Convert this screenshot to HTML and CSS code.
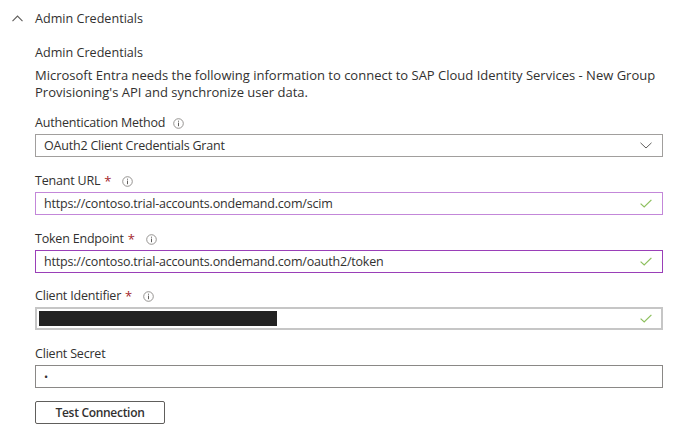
FILE: index.html
```html
<!DOCTYPE html>
<html>
<head>
<meta charset="utf-8">
<link rel="stylesheet" href="styles.css">
</head>
<body>
<div class="page">
  <div class="header">
    <svg class="chev-up" width="11" height="7" viewBox="0 0 11 7"><path d="M0.5 6.2 L5.5 1 L10.5 6.2" fill="none" stroke="#605e5c" stroke-width="1.1"/></svg>
    <span class="header-text">Admin Credentials</span>
  </div>
  <div class="section">
    <div class="title">Admin Credentials</div>
    <div class="desc">Microsoft Entra needs the following information to connect to SAP Cloud Identity Services - New Group Provisioning's API and synchronize user data.</div>

    <div class="field first">
      <div class="label">Authentication Method <span class="info"><svg width="11" height="11" viewBox="0 0 11 11"><circle cx="5.5" cy="5.5" r="4.8" fill="none" stroke="#8a8886" stroke-width="0.9"/><rect x="5" y="4.6" width="1" height="3.6" fill="#605e5c"/><rect x="5" y="2.7" width="1" height="1" fill="#605e5c"/></svg></span></div>
      <div class="box select">
        <span class="value">OAuth2 Client Credentials Grant</span>
        <svg class="chev-down" width="12" height="7" viewBox="0 0 12 7"><path d="M0.5 0.8 L6 6 L11.5 0.8" fill="none" stroke="#605e5c" stroke-width="1"/></svg>
      </div>
    </div>

    <div class="field">
      <div class="label">Tenant URL<span class="req">*</span><span class="info"><svg width="11" height="11" viewBox="0 0 11 11"><circle cx="5.5" cy="5.5" r="4.8" fill="none" stroke="#8a8886" stroke-width="0.9"/><rect x="5" y="4.6" width="1" height="3.6" fill="#605e5c"/><rect x="5" y="2.7" width="1" height="1" fill="#605e5c"/></svg></span></div>
      <div class="box valid-light">
        <span class="value">https://contoso.trial-accounts.ondemand.com/scim</span>
        <svg class="check" width="12" height="9" viewBox="0 0 12 9"><path d="M0.6 4.6 L4.2 8 L11.4 0.8" fill="none" stroke="#8cbf5c" stroke-width="1.2"/></svg>
      </div>
    </div>

    <div class="field">
      <div class="label">Token Endpoint<span class="req">*</span><span class="info"><svg width="11" height="11" viewBox="0 0 11 11"><circle cx="5.5" cy="5.5" r="4.8" fill="none" stroke="#8a8886" stroke-width="0.9"/><rect x="5" y="4.6" width="1" height="3.6" fill="#605e5c"/><rect x="5" y="2.7" width="1" height="1" fill="#605e5c"/></svg></span></div>
      <div class="box valid-dark">
        <span class="value">https://contoso.trial-accounts.ondemand.com/oauth2/token</span>
        <svg class="check" width="12" height="9" viewBox="0 0 12 9"><path d="M0.6 4.6 L4.2 8 L11.4 0.8" fill="none" stroke="#8cbf5c" stroke-width="1.2"/></svg>
      </div>
    </div>

    <div class="field tight">
      <div class="label">Client Identifier<span class="req">*</span><span class="info"><svg width="11" height="11" viewBox="0 0 11 11"><circle cx="5.5" cy="5.5" r="4.8" fill="none" stroke="#8a8886" stroke-width="0.9"/><rect x="5" y="4.6" width="1" height="3.6" fill="#605e5c"/><rect x="5" y="2.7" width="1" height="1" fill="#605e5c"/></svg></span></div>
      <div class="box gray-thick">
        <span class="redacted"></span>
        <svg class="check" width="12" height="9" viewBox="0 0 12 9"><path d="M0.6 4.6 L4.2 8 L11.4 0.8" fill="none" stroke="#8cbf5c" stroke-width="1.2"/></svg>
      </div>
    </div>

    <div class="field">
      <div class="label">Client Secret</div>
      <div class="box plain">
        <span class="value dot">•</span>
      </div>
    </div>

    <button class="btn">Test Connection</button>
  </div>
</div>
</body>
</html>
```

FILE: styles.css
```css
html, body {
  margin: 0;
  padding: 0;
  background: #ffffff;
}
body {
  font-family: "Open Sans", "Noto Sans", sans-serif;
  color: #323130;
  font-size: 13px;
}
.page {
  width: 679px;
}
.header {
  display: flex;
  align-items: center;
  height: 36px;
  padding-left: 12px;
}
.chev-up {
  margin-right: 12px;
}
.header-text {
  font-size: 12.6px;
}
.section {
  padding-left: 35px;
  width: 628px;
}
.title {
  margin-top: 7px;
  font-size: 12.6px;
  line-height: 20px;
}
.desc {
  margin-top: 4px;
  line-height: 17px;
}
.field {
  margin-top: 14px;
}
.field.first {
  margin-top: 12px;
}
.field.tight {
  margin-top: 13px;
}
.label {
  display: flex;
  align-items: center;
  height: 20px;
  line-height: 20px;
  margin-bottom: 1px;
  font-size: 12.5px;
  letter-spacing: -0.2px;
}
.req {
  color: #a4262c;
  margin-left: 4px;
  font-size: 13px;
}
.info {
  display: inline-flex;
  margin-left: 11px;
}
.label .info:first-child {
  margin-left: 8px;
}
.box {
  box-sizing: border-box;
  height: 23px;
  display: flex;
  align-items: center;
  justify-content: space-between;
  padding: 0 10px 0 8px;
  border: 1px solid #8a8886;
  font-size: 12.5px;
  letter-spacing: -0.2px;
}
.select {
  border-color: #a19f9d;
}
.valid-light {
  border-color: #c387d9;
}
.valid-dark {
  border-color: #9a3fb8;
}
.gray-thick {
  border: 2px solid #c6c6c6;
  padding-left: 2px;
  padding-right: 9px;
}
.plain {
  border-color: #8a8886;
}
.redacted {
  display: block;
  width: 238px;
  height: 15px;
  background: #222222;
}
.dot {
  font-size: 11px;
}
.btn {
  margin-top: 13px;
  width: 130px;
  height: 23px;
  box-sizing: border-box;
  border: 1px solid #605e5c;
  background: #ffffff;
  color: #323130;
  font-family: "Open Sans", "Noto Sans", sans-serif;
  font-size: 12px;
  font-weight: 600;
  letter-spacing: -0.3px;
  padding: 0;
  border-radius: 2px;
}
```
